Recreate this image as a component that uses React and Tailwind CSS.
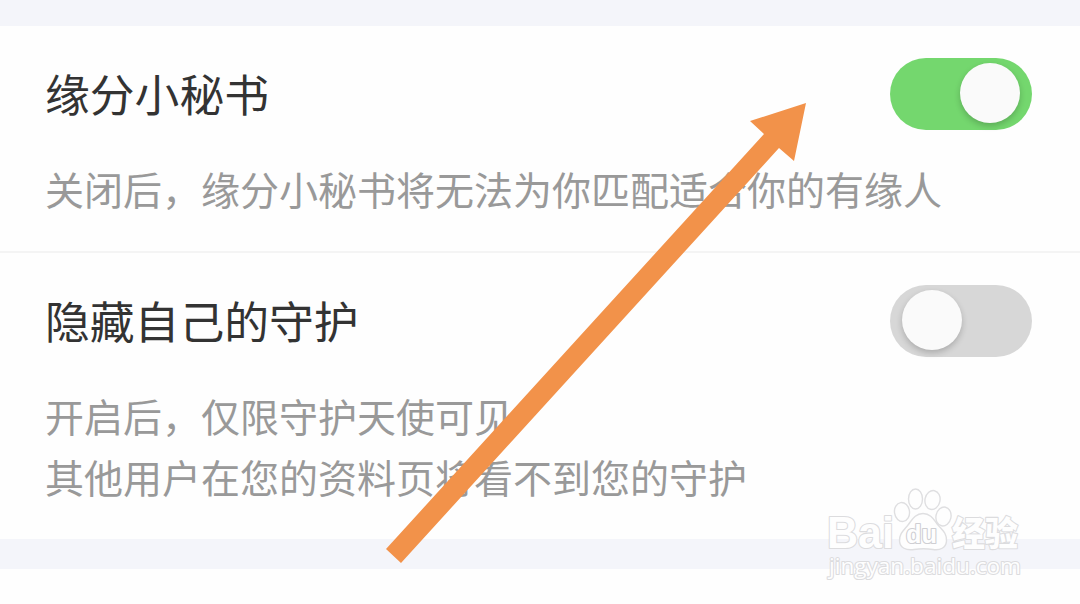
const Toggle = ({ checked }) => (
  <button
    role="switch"
    aria-checked={checked}
    className={`flex h-[72px] w-[142px] shrink-0 rounded-full pt-[5px] ${
      checked ? "justify-end bg-[#74d76e] pr-3" : "justify-start bg-[#d7d7d7] pl-3"
    }`}
  >
    <span className="h-[60px] w-[60px] rounded-full bg-[#fafafa] shadow-[0_3px_6px_rgba(0,0,0,0.2)]" />
  </button>
);

const SettingItem = ({ title, lines, checked }) => (
  <div className="px-[45px] pt-8">
    <div className="flex h-[72px] items-center justify-between pr-[3px]">
      <h2 className="pb-0.5 text-[44.8px] leading-[70px] text-[#333333]">{title}</h2>
      <Toggle checked={checked} />
    </div>
    <div className="mt-7 text-[39px] leading-[61px] text-[#999999]">
      {lines.map((line) => (
        <p key={line} className="whitespace-nowrap">{line}</p>
      ))}
    </div>
  </div>
);

const Arrow = () => (
  <svg className="absolute left-0 top-0" width="1080" height="604" viewBox="0 0 1080 604">
    <path d="M806 103L794 161L779 148L401 563L386 549L764 134L750 121Z" fill="#f2924a" />
  </svg>
);

const Watermark = () => (
  <svg className="absolute left-[810px] top-[475px]" width="230" height="120" viewBox="0 0 230 120">
    <g fill="#fefefe" stroke="#dfdfe1" strokeWidth="1.4" strokeLinejoin="round">
      <ellipse cx="92" cy="37" rx="7.5" ry="9.5" transform="rotate(-8 92 37)" />
      <ellipse cx="105.5" cy="24" rx="7" ry="10" />
      <ellipse cx="122.5" cy="25" rx="7.5" ry="9.5" transform="rotate(12 122.5 25)" />
      <ellipse cx="133.5" cy="41.5" rx="7.5" ry="9.5" transform="rotate(12 133.5 41.5)" />
      <path d="M113 38.5C121 38.5 124 45 128 50C132 55 137 58 136.5 66C136 73 130 75.5 123 74.5C116 73.5 111 73.5 104 74.5C96 75.5 90 73 89.5 66C89 59 94 55 98 50C102 45 105 38.5 113 38.5Z" />
    </g>
    <g
      fill="#fefefe"
      stroke="#dcdcde"
      strokeWidth="2.2"
      strokeLinejoin="round"
      className="[paint-order:stroke]"
      fontFamily="'Liberation Sans', sans-serif"
    >
      <text x="17" y="73" fontSize="44" fontWeight="700" textLength="67" lengthAdjust="spacingAndGlyphs">Bai</text>
      <text x="96" y="68" fontSize="25" fontWeight="700" stroke="#cfcfd3" textLength="31" lengthAdjust="spacingAndGlyphs">du</text>
      <text x="142" y="70.500" fontSize="34" fontWeight="900" fontFamily="'Noto Sans CJK SC', sans-serif" textLength="66" lengthAdjust="spacingAndGlyphs">经验</text>
      <text x="19" y="99" fontSize="22.500" fontWeight="500" fontFamily="'Open Sans', 'Noto Sans', sans-serif" textLength="192" lengthAdjust="spacingAndGlyphs">jingyan.baidu.com</text>
    </g>
  </svg>
);

export default function App() {
  return (
    <main className="relative h-[604px] w-[1080px] overflow-hidden bg-[#fefefe] font-['Noto_Sans_CJK_SC',sans-serif]">
      <div className="h-[26px] bg-[#f4f5fa]" />

      {/* Settings */}
      <section className="h-[225px]">
        <SettingItem title="缘分小秘书" lines={["关闭后，缘分小秘书将无法为你匹配适合你的有缘人"]} checked />
      </section>
      <div className="h-0.5 bg-[#f4f4f4]" />
      <section className="h-[286px]">
        <SettingItem
          title="隐藏自己的守护"
          lines={["开启后，仅限守护天使可见", "其他用户在您的资料页将看不到您的守护"]}
          checked={false}
        />
      </section>

      <div className="h-[30px] bg-[#f4f5fa]" />

      <Arrow />
      <Watermark />
    </main>
  );
}
